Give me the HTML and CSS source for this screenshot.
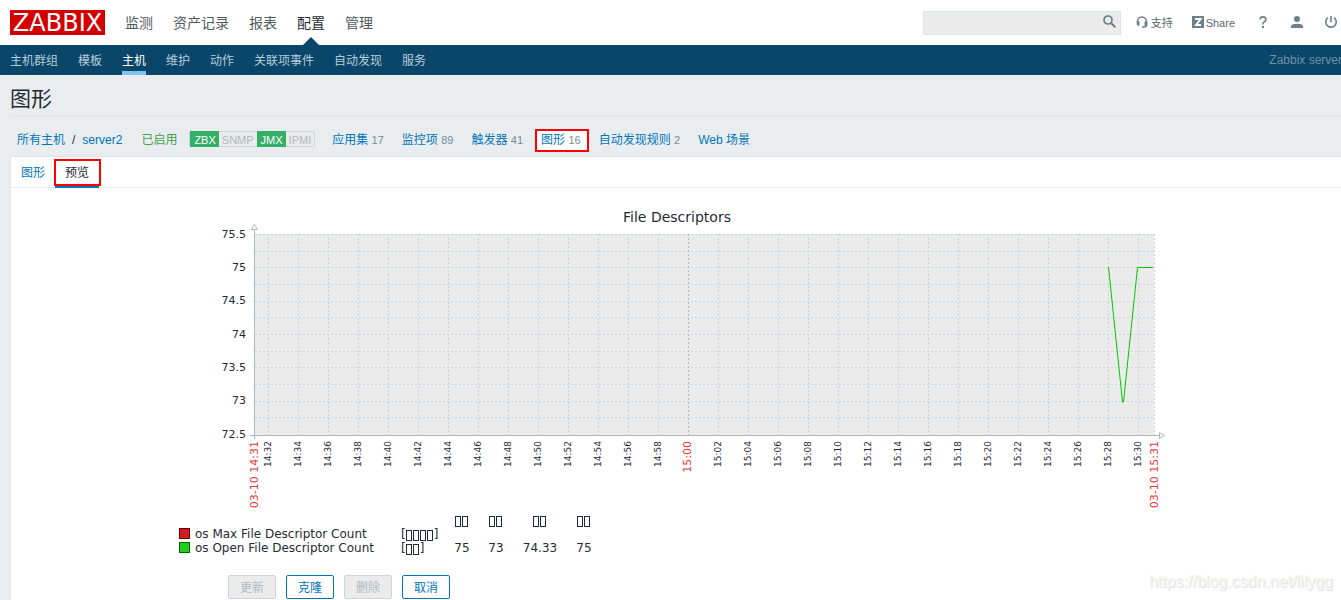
FILE: index.html
```html
<!DOCTYPE html>
<html lang="zh-CN">
<head>
<meta charset="utf-8">
<title>图形</title>
<link rel="stylesheet" href="styles.css">
</head>
<body>
<header class="top">
  <a class="logo" href="#">ZABBIX</a>
  <nav class="main-nav">
    <a href="#">监测</a>
    <a href="#">资产记录</a>
    <a href="#">报表</a>
    <a class="selected" href="#">配置</a>
    <a href="#">管理</a>
  </nav>
  <form class="search">
    <input type="text" aria-label="搜索">
    <button type="button" aria-label="搜索"><svg width="14" height="14" viewBox="0 0 14 14"><circle cx="5" cy="5" r="4" fill="none" stroke="currentColor" stroke-width="1.7"/><path d="M8 8l4.300 4.300" stroke="currentColor" stroke-width="2"/></svg></button>
  </form>
  <div class="tools">
    <a href="#"><svg width="13" height="12" viewBox="0 0 13 12"><path d="M1.500 6V5.500a4.500 4.500 0 0 1 9 0V9Q10.500 11 8 11H6" fill="none" stroke="currentColor" stroke-width="1.500"/><path d="M.7 5.500h2.800v4.200H2.200Q.7 9.500.7 8zM8.500 5.500h2.800v4.200H8.500z" fill="currentColor"/></svg><span>支持</span></a>
    <a href="#"><svg width="12" height="12" viewBox="0 0 12 12"><rect width="12" height="12" fill="currentColor"/><path d="M3 3h5.700L4 9h5.200" fill="none" stroke="#fff" stroke-width="1.900"/></svg><span>Share</span></a>
    <a href="#" aria-label="帮助"><svg width="8" height="12" viewBox="0 0 8 12"><path d="M1 3.500Q1.200.9 4 .9T6.900 3.500Q6.900 4.800 5.300 5.700T3.900 8.500" fill="none" stroke="currentColor" stroke-width="1.700"/><rect x="3" y="10" width="2" height="2" fill="currentColor"/></svg></a>
    <a href="#" aria-label="用户"><svg width="12" height="12" viewBox="0 0 12 12"><circle cx="6" cy="3" r="3" fill="currentColor"/><path d="M0 12v-1.500Q0 7.700 6 7.700t6 2.800V12z" fill="currentColor"/></svg></a>
    <a href="#" aria-label="退出"><svg width="12" height="12" viewBox="0 0 12 12"><path d="M3 1.700a5.200 5.200 0 1 0 6 0M6 0v6.200" fill="none" stroke="currentColor" stroke-width="1.600"/></svg></a>
  </div>
</header>
<nav class="sub-nav">
  <a href="#">主机群组</a>
  <a href="#">模板</a>
  <a class="selected" href="#">主机</a>
  <a href="#">维护</a>
  <a href="#">动作</a>
  <a href="#">关联项事件</a>
  <a href="#">自动发现</a>
  <a href="#">服务</a>
  <span class="server-name">Zabbix server</span>
</nav>
<main>
  <h1>图形</h1>
  <div class="crumbs">
    <span class="path"><a href="#">所有主机</a><span>/</span><a href="#">server2</a></span>
    <span class="enabled">已启用</span>
    <span class="badges"><span class="on">ZBX</span><span>SNMP</span><span class="on">JMX</span><span>IPMI</span></span>
    <span><a href="#">应用集</a> <small>17</small></span>
    <span><a href="#">监控项</a> <small>89</small></span>
    <span><a href="#">触发器</a> <small>41</small></span>
    <span class="current"><a href="#">图形</a> <small>16</small></span>
    <span><a href="#">自动发现规则</a> <small>2</small></span>
    <span><a href="#">Web 场景</a></span>
  </div>
  <section class="panel">
    <div class="tabs">
      <a href="#">图形</a>
      <a class="selected" href="#">预览</a>
    </div>
    <div class="graph">
      <svg class="chart" width="1000" height="311" viewBox="175 200 1000 311" role="img" aria-label="File Descriptors">
        <text class="title" x="677" y="222">File Descriptors</text>
        <rect x="254" y="234" width="900" height="201" fill="#ebebeb"/>
        <path class="grid" d="M255 234.500h900M255 251.500h900M255 267.500h900M255 284.500h900M255 301.500h900M255 317.500h900M255 334.500h900M255 351.500h900M255 367.500h900M255 384.500h900M255 401.500h900M255 417.500h900"/>
        <path class="grid" d="M268.500 234v201M298.500 234v201M328.500 234v201M358.500 234v201M388.500 234v201M418.500 234v201M448.500 234v201M478.500 234v201M508.500 234v201M538.500 234v201M568.500 234v201M598.500 234v201M628.500 234v201M658.500 234v201M718.500 234v201M748.500 234v201M778.500 234v201M808.500 234v201M838.500 234v201M868.500 234v201M898.500 234v201M928.500 234v201M958.500 234v201M988.500 234v201M1018.500 234v201M1048.500 234v201M1078.500 234v201M1108.500 234v201M1138.500 234v201M1154.500 234v201"/>
        <path class="grid major" d="M688.500 234v201"/>
        <path class="axis" d="M254.500 230v209M250 435.500h909"/>
        <path class="arrow" d="M251.500 229.500h6l-3-5zM1159.500 432.500v6l5-3z"/>
        <path class="series" d="M1108.500 267l14 135h1l14-134.500h15.500"/>
        <g class="y-labels">
          <text x="246" y="238">75.5</text><text x="246" y="271">75</text><text x="246" y="304">74.5</text><text x="246" y="338">74</text><text x="246" y="371">73.5</text><text x="246" y="404">73</text><text x="246" y="438">72.5</text>
        </g>
        <g class="x-labels" transform="rotate(-90)">
          <text x="-441" y="271">14:32</text><text x="-441" y="301">14:34</text><text x="-441" y="331">14:36</text><text x="-441" y="361">14:38</text><text x="-441" y="391">14:40</text><text x="-441" y="421">14:42</text><text x="-441" y="451">14:44</text><text x="-441" y="481">14:46</text><text x="-441" y="511">14:48</text><text x="-441" y="541">14:50</text><text x="-441" y="571">14:52</text><text x="-441" y="601">14:54</text><text x="-441" y="631">14:56</text><text x="-441" y="661">14:58</text><text x="-441" y="721">15:02</text><text x="-441" y="751">15:04</text><text x="-441" y="781">15:06</text><text x="-441" y="811">15:08</text><text x="-441" y="841">15:10</text><text x="-441" y="871">15:12</text><text x="-441" y="901">15:14</text><text x="-441" y="931">15:16</text><text x="-441" y="961">15:18</text><text x="-441" y="991">15:20</text><text x="-441" y="1021">15:22</text><text x="-441" y="1051">15:24</text><text x="-441" y="1081">15:26</text><text x="-441" y="1111">15:28</text><text x="-441" y="1141">15:30</text>
          <text class="date" x="-441" y="258">03-10 14:31</text><text class="date" x="-441" y="691">15:00</text><text class="date" x="-441" y="1158">03-10 15:31</text>
        </g>
      </svg>
      <table class="legend">
        <tr><td></td><td></td><td class="num"><i></i><i></i></td><td class="num"><i></i><i></i></td><td class="num wide"><i></i><i></i></td><td class="num"><i></i><i></i></td></tr>
        <tr><th><span class="swatch red"></span>os Max File Descriptor Count</th><td class="func">[<i></i><i></i><i></i><i></i>]</td><td></td><td></td><td></td><td></td></tr>
        <tr><th><span class="swatch green"></span>os Open File Descriptor Count</th><td class="func">[<i></i><i></i>]</td><td class="num">75</td><td class="num">73</td><td class="num wide">74.33</td><td class="num">75</td></tr>
      </table>
    </div>
    <div class="actions">
      <button type="button" disabled>更新</button>
      <button type="button">克隆</button>
      <button type="button" disabled>删除</button>
      <button type="button">取消</button>
    </div>
  </section>
</main>
<div class="watermark">https://blog.csdn.net/lilygg</div>
</body>
</html>
```
FILE: styles.css
```css
* { box-sizing: border-box; }
html { overflow: hidden; }
body {
  margin: 0;
  height: 100vh;
  overflow: hidden;
  display: flex;
  flex-direction: column;
  background: #e9edf0;
  color: #1f2c33;
  font: 12px/18px "Liberation Sans", "Noto Sans CJK SC", sans-serif;
  white-space: nowrap;
}
a { color: #0275b8; text-decoration: none; }
svg { display: block; flex: none; }
.top {
  height: 45px;
  flex: none;
  display: flex;
  align-items: center;
  padding-left: 10px;
  background: #fff;
}
.logo {
  width: 95px;
  height: 25px;
  background: #d40000;
  color: #fff;
  font: 24px/26px "DejaVu Sans", sans-serif;
  text-align: center;
}
.main-nav { display: flex; gap: 20px; margin-left: 20px; font-size: 14px; line-height: 43px; }
.main-nav a { position: relative; padding-top: 2px; color: #4f5b62; }
.main-nav .selected { color: #1f2c33; }
.main-nav .selected::after {
  content: "";
  position: absolute;
  left: 50%;
  bottom: 0;
  margin-left: -8px;
  border: 8px solid transparent;
  border-top: 0;
  border-bottom-color: #0a466a;
}
.search { position: relative; width: 198px; height: 24px; margin-left: auto; flex: none; }
.search input {
  width: 100%;
  height: 100%;
  background: #ebebeb;
  border: 1px solid #dfe4e7;
  padding: 0 28px 0 5px;
}
.search button {
  position: absolute;
  right: 4px;
  top: 4px;
  padding: 0;
  border: 0;
  background: none;
  color: #6b7f8c;
}
.tools { display: flex; align-items: center; margin: 0 4px 0 15px; flex: none; }
.tools a { display: flex; align-items: center; color: #6b7f8c; font-size: 11px; }
.tools svg { margin-bottom: 2px; }
.tools span { margin-left: 2px; color: #5a6870; }
.tools a + a { margin-left: 19px; }
.tools a + a + a { margin-left: 24px; }
.tools a + a + a + a + a { margin-left: 22px; }
.sub-nav {
  height: 30px;
  flex: none;
  display: flex;
  gap: 20px;
  padding-left: 10px;
  background: #0a466a;
  line-height: 30px;
}
.sub-nav a { padding-top: 1px; color: #b8ccd8; }
.sub-nav .selected { color: #fff; border-bottom: 4px solid #7dc4f2; }
.server-name { margin-left: auto; margin-right: -1px; color: #6d8fa5; }
main { flex: 1; display: flex; flex-direction: column; padding-left: 10px; }
h1 {
  margin: 0;
  height: 42px;
  line-height: 48px;
  font-size: 21px;
  font-weight: normal;
  border-bottom: 1px solid #dfe4e7;
}
.crumbs { display: flex; align-items: center; gap: 18px; height: 39px; padding: 7px 0 0 7px; }
.path { display: flex; gap: 7px; margin-right: 1px; }
.enabled { color: #429e47; margin-right: -6px; }
.crumbs small { font-size: 11px; color: #768d99; }
.badges {
  display: flex;
  margin: 0 -1px 2px 0;
  height: 16px;
  border: 1px solid #ccd5d9;
  border-radius: 2px;
  font-size: 11px;
  line-height: 16px;
  color: #acbbc2;
  background: #ebebeb;
}
.badges span { padding: 0 3px; }
.badges .on { background: #34af67; color: #fff; margin: -1px 0; padding-left: 4px; line-height: 18px; }
.crumbs .current { background: #fff; outline: 2px solid #f00; padding: 0 6px 1px 4px; margin: 0 -6px 0 -4px; }
.panel { flex: 1; background: #fff; border: solid #dfe4e7; border-width: 1px 0 0 1px; }
.tabs { display: flex; height: 31px; border-bottom: 1px solid #ebeef0; line-height: 32px; }
.tabs a { padding: 0 10px; }
.tabs .selected { color: #1f2c33; position: relative; border-bottom: 3px solid #0275b8; height: 31px; }
.tabs .selected::before {
  content: "";
  position: absolute;
  inset: 2px -2px -1px -1px;
  border: 2px solid #f00;
}
.graph { padding: 12px 0 0 164px; }
.chart { font-family: "DejaVu Sans", sans-serif; font-size: 11px; fill: #1f2c33; }
.title { font-size: 14px; text-anchor: middle; }
.grid { fill: none; stroke: #ccd5d9; stroke-dasharray: 2 2; shape-rendering: crispEdges; }
.major { stroke: #acbbc2; }
.axis { fill: none; stroke: #acbbc2; }
.arrow { fill: #fff; stroke: #acbbc2; }
.series { fill: none; stroke: #00c800; }
.y-labels { text-anchor: end; }
.x-labels { text-anchor: end; font-size: 9px; }
.x-labels .date { font-size: 11px; fill: #e33734; }
.legend { margin: 2px 0 0 4px; border-collapse: collapse; font: 12px/14px "DejaVu Sans", sans-serif; }
.legend td, .legend th { padding: 0; height: 14px; font-weight: normal; text-align: left; }
.legend th { width: 222px; }
.legend .func { width: 44px; }
.legend .num { width: 34px; text-align: center; }
.legend .wide { width: 54px; }
.legend i {
  display: inline-block;
  width: 6px;
  height: 11px;
  margin: 0 1px -1px 0;
  border: 1px solid #1f2c33;
  vertical-align: -2px;
}
.swatch { display: inline-block; width: 11px; height: 11px; margin-right: 5px; border: 1px solid #600; vertical-align: -1px; }
.red { background: #d01e1e; }
.green { background: #1ed01e; border-color: #060; }
.actions { display: flex; gap: 10px; padding: 20px 0 0 217px; }
.actions button {
  width: 48px;
  height: 24px;
  padding: 2px 0 0;
  background: #fff;
  border: 1px solid #0275b8;
  border-radius: 2px;
  color: #0275b8;
  font: inherit;
}
.actions button:disabled { background: #ebebeb; border-color: #ccd5d9; color: #acbbc2; }
.watermark { position: absolute; right: 8px; bottom: 8px; color: #f4f4f4; font-size: 16px; line-height: 20px; text-shadow: 1px 1px 1px #ddd; }
```
